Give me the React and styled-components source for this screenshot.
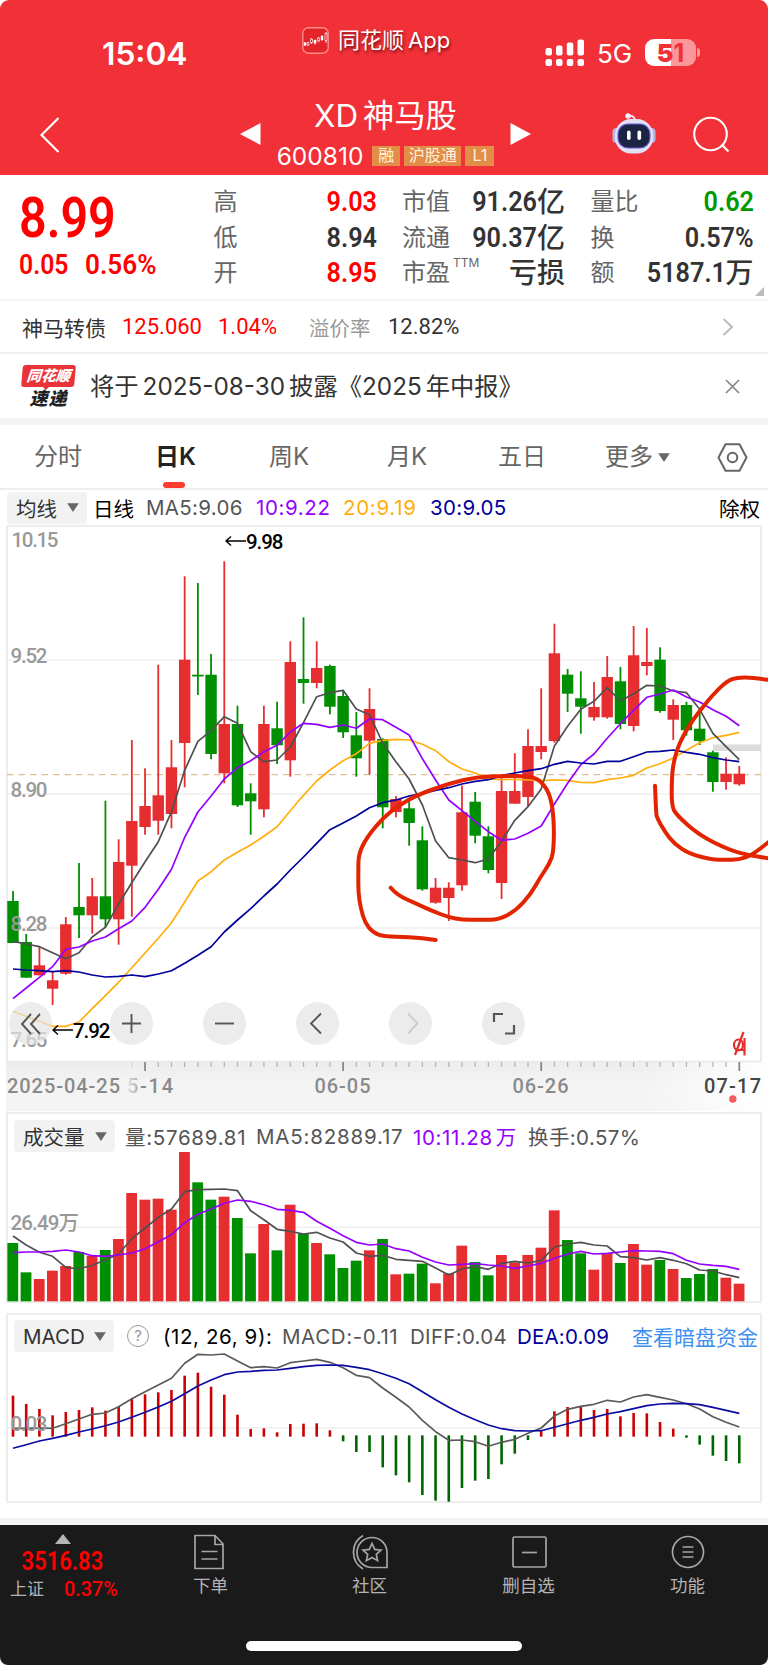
import styled, { createGlobalStyle } from "styled-components";

const RED = "#e62d2f";
const GREEN = "#008f00";
const STEP = 13.205;
const xAt = (i) => 13 + i * STEP;

// [high, bodyTop, bodyBottom, low, up]
const candles = [
  [891, 901, 943, 943, 0], [934, 942, 977.7, 977.7, 0], [946.7, 965.3, 975.3, 975.3, 1],
  [971.7, 980.3, 988.7, 1005, 1], [917, 924.3, 973.7, 974.7, 1], [863, 907, 915.3, 938, 0],
  [878, 896.3, 915.3, 933.7, 1], [800.7, 896.3, 919.3, 927, 0], [839.3, 862, 919.3, 944.7, 1],
  [740, 821, 865.7, 916.7, 1], [768.3, 806, 827, 834.7, 1], [664.7, 795.3, 820.7, 834.7, 1],
  [740, 767.3, 814, 828.3, 1], [576.3, 659.7, 743, 787.3, 1], [583, 674.7, 676.5, 695, 0],
  [654, 674.7, 754, 759.3, 0], [561.3, 724, 773.3, 783.3, 1], [705.7, 724, 805.3, 807, 0],
  [783.3, 793.3, 801.3, 834.7, 0], [705.7, 724, 809.3, 817.3, 1], [701.7, 728.3, 745.3, 764, 0],
  [641.3, 662, 760.3, 776.7, 1], [617.3, 679, 683, 703.7, 0], [641.3, 668, 683, 688.3, 1],
  [664.7, 666, 706.7, 714.3, 0], [690.3, 696, 732.3, 738, 0], [712, 735.3, 758.3, 776.7, 0],
  [688.3, 709, 740.7, 774.7, 1], [738.3, 739, 807.3, 828.3, 0], [796, 799, 812, 817.3, 1],
  [800, 808.3, 823, 845.7, 0], [826.3, 840.3, 889.3, 890.7, 0], [878, 887.7, 902.7, 903.7, 1],
  [882.3, 887.7, 898, 921, 1], [785.5, 812.3, 885.3, 890.7, 1], [792, 801.7, 835.7, 843.3, 0],
  [826.3, 836.3, 870, 873.3, 0], [776.7, 791, 883, 899, 1], [753.3, 791, 803.7, 803.7, 1],
  [729.3, 746, 797, 806.7, 1], [688.3, 746, 752, 759.3, 1], [623.7, 653.3, 741, 742.7, 1],
  [669, 674.7, 693.7, 712, 0], [671.3, 698.3, 706.7, 733.7, 0], [682, 707, 717.3, 720.7, 1],
  [656, 677, 717.3, 718.7, 1], [667, 681.3, 724, 729.3, 0], [626, 655.3, 726, 731.3, 1],
  [628, 662, 666, 675.3, 1], [647.3, 659.7, 711, 712.7, 0], [699.3, 705, 719.7, 740, 1],
  [701.7, 705, 730.3, 735.7, 0], [711, 728.7, 741, 745, 0], [750.7, 752.3, 782, 791.7, 0],
  [757.3, 773.7, 782, 789.7, 1], [766, 773.7, 784.3, 785.7, 1],
];

const ma5 = [941.3, 944, 946.7, 952.7, 958.7, 952.7, 937, 927.3, 904, 882.7, 861.7, 841.7, 811.7, 770.3, 741.3, 730.7, 716.7, 723.3, 751.7, 761.7, 760, 747, 722.7, 696.7, 692.7, 690.3, 709, 714.7, 743, 761.7, 779, 805, 841, 857.7, 860, 862.7, 859, 841, 820.3, 806.7, 788.9, 746, 726.3, 709.3, 701.3, 687.7, 701, 693.7, 685.3, 686, 691, 692.7, 709.3, 733.3, 746.7, 759.7];
const ma10 = [998.7, 988, 977.3, 966.7, 949.3, 947, 941, 937, 928.7, 921, 907.3, 889.3, 869.3, 837.3, 812, 796, 779, 767.7, 760.7, 751.7, 745.3, 732, 723.3, 724.3, 727.3, 725, 728.3, 719, 719.7, 727.3, 735, 758.7, 780, 800, 810.7, 821.3, 831.7, 840.3, 839, 833.3, 826, 804, 783.3, 764.7, 754, 738.3, 723.7, 710.3, 697.3, 694, 690, 697, 702, 709.7, 716.3, 725.7];
const ma20 = [1011.3, 1016.3, 1021.3, 1026.3, 1026.3, 1022, 1008.7, 995.7, 982.3, 967.7, 953, 938.3, 922.7, 902, 881, 871.7, 860, 852.3, 845, 836.3, 826.7, 810.7, 795.3, 781, 770, 760.7, 753.7, 743.3, 740.3, 739.3, 740, 744.3, 750.7, 761.7, 769, 773, 779, 779.7, 779.3, 780, 780.7, 780, 780.3, 782.3, 782.7, 779.7, 778, 775.3, 768, 763.7, 758, 750.3, 742.7, 737.7, 735.3, 732.3];
const ma30 = [969, 970, 970.7, 971.7, 970.7, 972, 975, 977, 976.3, 975, 976.7, 974, 970.7, 963.3, 955.3, 946.7, 932, 920, 908.7, 896, 884, 870, 857, 843.3, 829.7, 823, 816, 807.7, 802.7, 800, 796, 793.3, 790.5, 787.7, 784, 781.3, 779.7, 775.7, 773, 770.7, 768.7, 764.3, 761.3, 763, 764, 761.3, 761.3, 756.7, 752, 751.3, 750, 752.3, 754.3, 757.7, 760, 761.7];

// volume and macd series are stored in thirds of a pixel from the panel top
const volume = [399, 487, 507, 482, 468, 426, 437, 420, 387, 249, 269, 266, 299, 126, 217, 269, 260, 324, 430, 342, 421, 284, 372, 399, 433, 474, 452, 421, 387, 493, 491, 461, 520, 490, 407, 456, 496, 435, 457, 435, 413, 301, 390, 430, 479, 430, 459, 402, 464, 450, 477, 504, 492, 477, 503, 521];
const vol5 = [378, 405, 427, 439, 472, 477, 466, 450, 432, 386, 354, 322, 297, 245, 239, 238, 237, 242, 302, 329, 358, 364, 372, 367, 384, 396, 429, 439, 436, 448, 451, 454, 474, 495, 477, 470, 478, 460, 454, 459, 451, 411, 402, 397, 405, 408, 440, 443, 450, 443, 451, 461, 480, 483, 494, 503];
const vol10 = [428, 426, 426, 424, 420, 426, 437, 439, 435, 429, 416, 395, 374, 338, 313, 297, 280, 270, 274, 284, 298, 301, 307, 334, 355, 377, 397, 405, 402, 416, 423, 442, 456, 465, 463, 461, 465, 468, 475, 468, 460, 445, 432, 424, 432, 430, 426, 422, 423, 424, 431, 451, 462, 466, 469, 478];

const macd = [272, 297, 312, 331, 321, 315, 307, 317, 305, 282, 268, 262, 255, 212, 203, 245, 269, 329, 372, 370, 382, 357, 356, 355, 376, 409, 441, 441, 487, 511, 532, 570, 587, 590, 549, 527, 522, 478, 446, 405, 377, 319, 306, 306, 315, 312, 334, 324, 325, 351, 371, 398, 419, 452, 468, 475];
const diff = [370, 370, 369, 370, 356, 342, 328, 324, 305, 281, 260, 240, 220, 175, 148, 150, 147, 168, 188, 185, 189, 173, 168, 163, 172, 188, 211, 218, 249, 277, 306, 346, 380, 406, 405, 410, 424, 412, 403, 385, 369, 333, 313, 304, 298, 286, 291, 276, 269, 277, 285, 296, 312, 335, 352, 366];
const dea = [430, 419, 408, 400, 391, 381, 372, 362, 351, 337, 322, 306, 289, 266, 243, 225, 209, 201, 199, 196, 195, 190, 185, 181, 180, 181, 187, 194, 206, 220, 236, 260, 284, 307, 327, 344, 360, 371, 377, 378, 377, 367, 356, 346, 337, 327, 320, 311, 302, 297, 295, 296, 299, 307, 316, 325];

const strokes = [
  [[390.7, 887.7], [397, 895], [417, 904], [434, 911.7], [449, 917.3], [462, 919.7], [480, 919.7], [499, 919.7], [515.7, 910.7], [530.7, 894.3], [540, 877.7], [549.7, 863.3], [553.7, 851.7], [554, 820], [550.7, 796.7], [543, 783], [532, 776], [500.7, 776], [477, 777], [450.7, 783], [417, 795], [398, 806], [383, 818], [367, 837], [358.5, 854], [358.3, 872], [358.3, 893], [360.7, 908], [365, 923], [373, 932.7], [384, 936.7], [409, 936.7], [435.7, 940]],
  [[655, 785.7], [656, 812], [657, 818], [665, 832], [674, 843.5], [689, 853.8], [712.3, 859.7], [725, 859.7], [739, 859.7], [752, 855], [770, 841]],
  [[770, 680], [754, 677.7], [737.3, 677.3], [727.3, 681], [714, 693.3], [692.3, 720], [679, 743.3], [673.3, 763.3], [671.7, 780], [671.7, 806], [676.5, 815], [699, 835], [729, 850], [750.7, 855.7], [770, 858.5]],
];

const points = (list, top = 0, scale = 1) =>
  list.map((v, i) => `${xAt(i).toFixed(1)},${(top + v * scale).toFixed(1)}`).join(" ");

// smooths a free-hand stroke through the midpoints of its samples
const smooth = (pts) => {
  let d = `M${pts[0]}`;
  for (let i = 1; i < pts.length - 1; i++) {
    const [x, y] = pts[i];
    const [nx, ny] = pts[i + 1];
    d += ` Q${x} ${y} ${(x + nx) / 2} ${(y + ny) / 2}`;
  }
  return `${d} L${pts[pts.length - 1]}`;
};

const Line = ({ list, color, top, scale }) => (
  <polyline points={points(list, top, scale)} fill="none" stroke={color} strokeWidth="1.7" strokeLinejoin="round" />
);

const Caret = () => (
  <svg width="12" height="9" viewBox="0 0 12 9">
    <path d="M0.2 0.3h11.6L6 8.9z" fill="#666" />
  </svg>
);

const KLineChart = () => (
  <Canvas width="768" height="586" viewBox="0 525 768 586">
    <defs>
      <linearGradient id="axis" x1="0" y1="0" x2="0" y2="1">
        <stop offset="0" stopColor="#ededed" />
        <stop offset="0.5" stopColor="#f4f4f4" />
        <stop offset="1" stopColor="#f3f3f3" />
      </linearGradient>
      <linearGradient id="axisFade" x1="0" y1="0" x2="1" y2="0">
        <stop offset="0" stopColor="#fff" stopOpacity="0" />
        <stop offset="1" stopColor="#fff" />
      </linearGradient>
      <linearGradient id="dateFade" x1="0" y1="0" x2="1" y2="0">
        <stop offset="0" stopColor="#f3f3f3" />
        <stop offset="1" stopColor="#f3f3f3" stopOpacity="0.3" />
      </linearGradient>
    </defs>
    <rect x="6" y="1062" width="762" height="49" fill="url(#axis)" />
    <rect x="640" y="1062" width="128" height="49" fill="url(#axisFade)" />
    <rect x="7" y="526" width="754" height="535.5" fill="none" stroke="#ebebeb" strokeWidth="1.8" />
    {[660, 794, 928].map((y) => (
      <path key={y} d={`M7 ${y}H761`} stroke="#efefef" strokeWidth="1.4" />
    ))}
    <path d="M7 774.6H761" stroke="#dfbf98" strokeWidth="1.3" strokeDasharray="6.5 5" />
    <rect x="713" y="744.5" width="48" height="6.5" fill="#dcdcdc" />

    {candles.map(([high, top, bottom, low, up], i) => (
      <g key={i} fill={up ? RED : GREEN}>
        <rect x={xAt(i) - 0.9} y={high} width="1.8" height={low - high} />
        <rect x={xAt(i) - 5.7} y={top} width="11.4" height={bottom - top} />
      </g>
    ))}
    <Line list={ma20} color="#ffae0d" />
    <Line list={ma5} color="#505050" />
    <Line list={ma10} color="#9500ff" />
    <Line list={ma30} color="#00009c" />

    <AxisText x="11.5" y="547" textLength="47">10.15</AxisText>
    <AxisText x="10.5" y="663" textLength="37">9.52</AxisText>
    <AxisText x="10.5" y="797" textLength="37">8.90</AxisText>
    <AxisText x="10.5" y="931" textLength="37">8.28</AxisText>
    <AxisText x="10.5" y="1047" textLength="37">7.65</AxisText>

    <g fill="none" stroke="#000" strokeWidth="1.4">
      <path d="M246 541H226M231 536.5L226 541L231 545.5" />
      <path d="M73 1030H53M58 1025.5L53 1030L58 1034.5" />
    </g>
    <MarkText x="246" y="548.5" textLength="37.5">9.98</MarkText>
    <MarkText x="73" y="1038" textLength="37.5">7.92</MarkText>

    {candles.map((_, i) => {
      if (i < 9) return null;
      const major = i % 15 === 10;
      return (
        <path
          key={i}
          d={`M${xAt(i)} 1062v${major ? 9 : 5}`}
          stroke={major ? "#888" : "#b5b5b5"}
          strokeWidth={major ? 1.8 : 1.3}
          opacity={i === 9 ? 0.4 : 1}
        />
      );
    })}
    <DateText x="127" y="1093" textLength="46">5-14</DateText>
    <rect x="124" y="1074" width="15" height="24" fill="url(#dateFade)" />
    <DateText x="7" y="1093" textLength="113">2025-04-25</DateText>
    <DateText x="314.5" y="1093" textLength="56">06-05</DateText>
    <DateText x="512.5" y="1093" textLength="56">06-26</DateText>
    <DateText x="704" y="1093" textLength="57" $active>07-17</DateText>
    <circle cx="732.8" cy="1099" r="3.7" fill="#f55a60" />

    <g fill="none" stroke={RED} strokeWidth="2.2">
      <ellipse cx="738.5" cy="1045" rx="4.5" ry="5.5" />
      <path d="M744.5 1038V1055.5M743.5 1032L735 1055M735.5 1050H744" />
    </g>
    {strokes.map((pts, i) => (
      <path key={i} d={smooth(pts)} fill="none" stroke="#e32400" strokeWidth="4" strokeLinecap="round" />
    ))}
  </Canvas>
);

const VolumeChart = () => (
  <Canvas width="768" height="194" viewBox="0 1111 768 194">
    <rect x="7" y="1113" width="754" height="189" fill="none" stroke="#ebebeb" strokeWidth="1.8" />
    <path d="M7 1227.3H761" stroke="#efefef" strokeWidth="1.4" />
    {volume.map((v, i) => (
      <rect key={i} x={xAt(i) - 5.6} y={1110 + v / 3} width="10.8" height={(574 - v) / 3} fill={candles[i][4] ? RED : GREEN} />
    ))}
    <Line list={vol5} color="#505050" top={1110} scale={1 / 3} />
    <Line list={vol10} color="#9500ff" top={1110} scale={1 / 3} />
    <AxisText x="10.5" y="1230" textLength="68.5">26.49万</AxisText>
  </Canvas>
);

const MacdChart = () => (
  <Canvas width="768" height="213" viewBox="0 1305 768 213">
    <rect x="7" y="1314" width="754" height="188" fill="none" stroke="#ebebeb" strokeWidth="1.8" />
    <path d="M7 1427.8H761" stroke="#efefef" strokeWidth="1.4" />
    {macd.map((v, i) => {
      const up = v < 393;
      return (
        <rect
          key={i}
          x={xAt(i) - 1.3}
          y={1305 + (up ? v : 391) / 3}
          width="2.6"
          height={Math.abs(v - (up ? 395 : 391)) / 3}
          fill={up ? "#cc0000" : "#006600"}
        />
      );
    })}
    <Line list={diff} color="#5a5a5a" top={1305} scale={1 / 3} />
    <Line list={dea} color="#0b0ba3" top={1305} scale={1 / 3} />
    <AxisText x="10.5" y="1430.5" textLength="37">0.03</AxisText>
  </Canvas>
);

const quotes = [
  [["高", "9.03", "#f00"], ["低", "8.94"], ["开", "8.95", "#f00"]],
  [["市值", "91.26", "", "亿"], ["流通", "90.37", "", "亿"], ["市盈", "", "", "亏损", "TTM"]],
  [["量比", "0.62", "#009900"], ["换", "0.57%"], ["额", "5187.1", "", "万"]],
];

const tabs = [
  { name: "分时", width: 121 },
  { name: "日K", width: 114, active: true },
  { name: "周K", width: 118 },
  { name: "月K", width: 111 },
  { name: "五日", width: 107 },
  { name: "更多", width: 80, more: true },
];

const App = () => {
  return (
    <Screen>
      <GlobalStyle />
      <Header>
        <StatusBar>
          <Clock>15:04</Clock>
          <AppMark>
            <svg width="27" height="27" viewBox="0 0 27 27">
              <rect x="0.8" y="0.8" width="25.4" height="25.4" rx="5.5" fill="#e3242b" stroke="#ff8a8a" strokeWidth="1.4" />
              <g fill="none" stroke="#fff" strokeWidth="0.8">
                <path d="M3 15v4M6 15v4M9.500 11v6M13 12.500v5M16.500 10v5M20 8v6M24 5v11" />
              </g>
              <path d="M1.800 15.500h2.400v3h-2.400zM11.800 13h2.400v3.500h-2.400zM18.800 9h2.400v4h-2.400z" fill="#fff" />
              <path d="M5 15.500h2v2.500h-2zM8.500 12h2v3.500h-2zM15.500 11h2v3h-2zM23 6.500h2v7h-2z" fill="#e3242b" stroke="#fff" strokeWidth="0.7" />
            </svg>
            <AppName>同花顺<i>App</i></AppName>
          </AppMark>
          <Signals>
            <svg width="40" height="28" viewBox="0 0 40 28" fill="#fff">
              <rect x="0.5" y="9" width="6.5" height="7.5" rx="2" />
              <rect x="11" y="6.5" width="6.5" height="10" rx="2" />
              <rect x="21.8" y="3.5" width="6.5" height="13" rx="2" />
              <rect x="32.5" y="0.5" width="6.5" height="16" rx="2" />
              <rect x="0.5" y="20" width="6.5" height="7" rx="2" />
              <rect x="11" y="20" width="6.5" height="7" rx="2" />
              <rect x="21.8" y="20" width="6.5" height="7" rx="2" />
              <rect x="32.5" y="20" width="6.5" height="7" rx="2" />
            </svg>
            <Network>5G</Network>
            <Battery><b>5</b>1</Battery>
            <BatteryTip />
          </Signals>
        </StatusBar>
        <TitleBar>
          <svg width="20" height="36" viewBox="0 0 20 36">
            <path d="M18.5 1L1.5 18L18.5 35" fill="none" stroke="#fff" strokeWidth="2.2" />
          </svg>
          <Switcher>
            <svg width="21" height="22" viewBox="0 0 21 22"><path d="M20.5 0v22L0 11z" fill="#fff" /></svg>
            <Stock>
              <StockName>XD<span>神马股</span></StockName>
              <StockMeta>
                <Code>600810</Code>
                <Tag $w={28}>融</Tag>
                <Tag $w={57}>沪股通</Tag>
                <Tag $w={29}>L1</Tag>
              </StockMeta>
            </Stock>
            <svg width="21" height="22" viewBox="0 0 21 22"><path d="M0.5 0v22L21 11z" fill="#fff" /></svg>
          </Switcher>
          <Actions>
            <svg width="44" height="41" viewBox="0 0 44 41">
              <path d="M16 3q7-1 7 5" fill="none" stroke="#e9e6f8" strokeWidth="2" />
              <circle cx="16" cy="3" r="2.7" fill="#f4f2ff" />
              <rect x="0.5" y="15" width="8" height="15" rx="4" fill="#b9b5e2" />
              <rect x="35.5" y="15" width="8" height="15" rx="4" fill="#b9b5e2" />
              <rect x="3" y="6" width="38" height="34.5" rx="16" fill="#e3e1f6" />
              <rect x="6" y="11" width="32" height="24" rx="10" fill="#1c2443" stroke="#6c5bd0" strokeWidth="1.2" />
              <rect x="15" y="17.5" width="3.6" height="9.5" rx="1.8" fill="#fff" />
              <rect x="25.5" y="17.5" width="3.6" height="9.5" rx="1.8" fill="#fff" />
            </svg>
            <svg width="37" height="37" viewBox="0 0 37 37" fill="none" stroke="#fff" strokeWidth="2.1">
              <circle cx="17.5" cy="18" r="16.3" />
              <path d="M29 29l6.5 6.5" />
            </svg>
          </Actions>
        </TitleBar>
      </Header>

      <QuotePanel>
        <Latest>
          <Price>8.99</Price>
          <Change>
            <Din $size={27.5} $scale={0.9}>0.05</Din>
            <Din $size={27.5} $scale={0.95}>0.56%</Din>
          </Change>
        </Latest>
        {quotes.map((rows, i) => (
          <QuoteColumn key={i}>
            {rows.map(([label, value, color, unit, sup]) => (
              <QuoteRow key={label}>
                <QuoteLabel>{label}{sup && <sup>{sup}</sup>}</QuoteLabel>
                <QuoteValue $color={color || "#333"}>
                  <Din $size={28} $scale={0.9} $right>{value}</Din>
                  {unit}
                </QuoteValue>
              </QuoteRow>
            ))}
          </QuoteColumn>
        ))}
        <Corner width="9" height="9" viewBox="0 0 9 9"><path d="M9 0v9H0z" fill="#bbb" /></Corner>
      </QuotePanel>

      <BondRow>
        <Item $w={100} $size={21}>神马转债</Item>
        <Item $w={96} $color="#f00">125.060</Item>
        <Item $w={91} $color="#f00">1.04%</Item>
        <Item $w={79} $size={20.5} $color="#999">溢价率</Item>
        <Item>12.82%</Item>
        <svg width="12" height="18" viewBox="0 0 12 18"><path d="M1.5 1L10 9L1.5 17" fill="none" stroke="#bbb" strokeWidth="2" /></svg>
      </BondRow>

      <NewsRow>
        <Logo>
          <LogoTop>同花顺</LogoTop>
          <LogoBottom>速递</LogoBottom>
        </Logo>
        <NewsText>将于<em>2025-08-30</em>披露《2025<em>年中报》</em></NewsText>
        <svg width="15" height="15" viewBox="0 0 15 15"><path d="M1 1L14 14M14 1L1 14" stroke="#888" strokeWidth="1.7" /></svg>
      </NewsRow>

      <Tabs>
        {tabs.map((tab) => (
          <Tab key={tab.name} $w={tab.width} $active={tab.active}>
            {tab.name}
            {tab.more && <Caret />}
          </Tab>
        ))}
        <svg width="31" height="29" viewBox="0 0 31 29" fill="none" stroke="#666" strokeWidth="2">
          <path d="M8.5 1.2h14L29.5 14.5L22.5 27.8h-14L1.5 14.5z" strokeLinejoin="round" />
          <circle cx="15.5" cy="14.5" r="4.8" />
        </svg>
      </Tabs>

      <MaLegend>
        <Picker $w={80}>均线<Caret /></Picker>
        <Item $w={53} $color="#000">日线</Item>
        <Item $w={110} $color="#555" $spacing={0.3}>MA5:9.06</Item>
        <Item $w={87} $color="#9500ff" $spacing={0.6}>10:9.22</Item>
        <Item $w={87} $color="#ffae0d" $spacing={0.7}>20:9.19</Item>
        <Item $color="#00009c" $spacing={0.3}>30:9.05</Item>
        <Adjust>除权</Adjust>
      </MaLegend>

      <Panel $height={586}>
        <KLineChart />
        <Controls>
          <RoundButton><path d="M22 12L13 22L22 32M31 12L22 22L31 32" /></RoundButton>
          <RoundButton $first><path d="M12 21.5H31M21.5 12V31" /></RoundButton>
          <RoundButton><path d="M12 21.5H31" /></RoundButton>
          <RoundButton><path d="M25 11.5L15 21.5L25 31.5" /></RoundButton>
          <RoundButton $muted><path d="M19 11.5L28.5 21.5L19 31.5" /></RoundButton>
          <RoundButton><path d="M12 20V12H21M23 31.5H32V23" strokeWidth="2.2" /></RoundButton>
        </Controls>
      </Panel>

      <Panel $height={194}>
        <VolumeChart />
        <Legend $top={9}>
          <Picker $w={101}>成交量<Caret /></Picker>
          <Item $w={131} $color="#555" $spacing={0.7}>量:57689.81</Item>
          <Item $w={157} $color="#555" $spacing={0.8}>MA5:82889.17</Item>
          <Item $w={115} $color="#9500ff" $spacing={0.6}>10:11.28<s>万</s></Item>
          <Item $color="#555" $spacing={0.4}>换手:0.57%</Item>
        </Legend>
      </Panel>

      <Panel $height={213}>
        <MacdChart />
        <Legend $top={15}>
          <Picker $w={100}>MACD<Caret /></Picker>
          <HelpIcon>?</HelpIcon>
          <Item $w={119} $color="#000" $spacing={0.6}>(12, 26, 9):</Item>
          <Item $w={128} $color="#555" $spacing={0.6}>MACD:-0.11</Item>
          <Item $w={107} $color="#555" $spacing={0.3}>DIFF:0.04</Item>
          <Item $w={115} $color="#00009c" $spacing={0.2}>DEA:0.09</Item>
          <Item $color="#3d8ff2" $size={21}>查看暗盘资金</Item>
        </Legend>
      </Panel>

      <BottomBar>
        <IndexBox>
          <svg width="16" height="10" viewBox="0 0 16 10"><path d="M8 0L16 10H0z" fill="#b5b5b5" /></svg>
          <IndexValue>3516.83</IndexValue>
          <IndexMeta>上证<Din $size={21} $scale={0.94} $weight={500} $color="#f00">0.37%</Din></IndexMeta>
        </IndexBox>
        <NavItem>
          <svg width="36" height="36" viewBox="0 0 36 36">
            <path d="M2 1.500h20l8 8.500v24.500h-28zM22 2v8.500h8M8.500 17.500h16M8.500 25h16" />
          </svg>
          下单
        </NavItem>
        <NavItem>
          <svg width="36" height="36" viewBox="0 0 36 36">
            <path d="M20 3.500a15 15 0 0 0 0 30h15v-15a15 15 0 0 0-15-15z M11 1.500a19.500 19.500 0 0 0 0 33.500" />
            <path d="M20 9.500l2.700 5.900 6.300 0.700-4.700 4.300 1.300 6.300-5.600-3.200-5.600 3.200 1.300-6.300-4.700-4.300 6.300-0.700z" />
          </svg>
          社区
        </NavItem>
        <NavItem>
          <svg width="36" height="36" viewBox="0 0 36 36">
            <rect x="2" y="3" width="33" height="30" rx="1.500" />
            <path d="M11 18.500h15" />
          </svg>
          删自选
        </NavItem>
        <NavItem>
          <svg width="36" height="36" viewBox="0 0 36 36">
            <circle cx="18" cy="18" r="15.500" />
            <path d="M12.500 13h11M12.500 18h11M12.500 23h11" />
          </svg>
          功能
        </NavItem>
        <HomeIndicator />
      </BottomBar>
    </Screen>
  );
};

export default App;

const RoundButton = ({ children, $first, $muted }) => (
  <Round $first={$first}>
    <svg width="43" height="43" viewBox="0 0 43 43" fill="none" stroke={$muted ? "#ccc" : "#555"} strokeWidth="1.9">
      {children}
    </svg>
  </Round>
);

const GlobalStyle = createGlobalStyle`
  body {
    margin: 0;
    background-color: white;
    font-family: Inter, "Noto Sans CJK SC", sans-serif;
  }
  * {
    box-sizing: border-box;
  }
  svg {
    display: block;
    flex-shrink: 0;
  }
`;

const Screen = styled.div`
  width: 768px;
  height: 1665px;
  display: flex;
  flex-direction: column;
  overflow: hidden;
  background-color: white;
  white-space: nowrap;
`;

const Header = styled.header`
  height: 174.5px;
  flex-shrink: 0;
  background-color: #f23037;
  border-radius: 9px 9px 0 0;
  color: white;
`;

const StatusBar = styled.div`
  height: 88px;
  display: flex;
  align-items: flex-start;
`;

const Clock = styled.div`
  width: 200px;
  margin: 33.5px 0 0 102px;
  font-size: 31.7px;
  line-height: 39px;
  font-weight: 600;
`;

const AppMark = styled.div`
  width: 243px;
  display: flex;
  gap: 9px;
  margin-top: 27px;
`;

const AppName = styled.span`
  font-size: 22px;
  line-height: 27px;
  font-weight: 400;
  text-shadow: 1px 2px 3px rgba(60, 0, 0, 0.7);

  i {
    font-style: normal;
    margin-left: 4px;
  }
`;

const Signals = styled.div`
  display: flex;
  align-items: center;
  margin-top: 37.5px;
`;

const Network = styled.span`
  width: 48px;
  margin-left: 12px;
  padding-top: 2px;
  font-size: 26px;
  line-height: 28px;
  font-weight: 400;
`;

const Battery = styled.div`
  width: 51px;
  height: 27px;
  border-radius: 9px;
  background: linear-gradient(90deg, white 51%, #f9979b 51%);
  color: #f23037;
  font-size: 25px;
  line-height: 28px;
  font-weight: 700;
  text-align: center;
`;

const BatteryTip = styled.div`
  width: 3px;
  height: 9px;
  margin-left: 1px;
  border-radius: 0 4px 4px 0;
  background-color: #f9979b;
`;

const TitleBar = styled.div`
  height: 86px;
  display: flex;
  padding-left: 40px;

  > svg {
    margin-top: 29px;
  }
`;

const Switcher = styled.div`
  width: 372px;
  display: flex;
  margin-left: 180px;

  > svg {
    margin-top: 35px;
  }
`;

const Stock = styled.div`
  width: 249px;
  display: flex;
  flex-direction: column;
  align-items: center;
`;

const StockName = styled.div`
  margin-top: 9px;
  font-size: 31.3px;
  line-height: 38px;
  font-weight: 400;

  span {
    margin-left: 5px;
  }
`;

const StockMeta = styled.div`
  display: flex;
  align-items: center;
  gap: 4px;
  margin-top: 11px;
`;

const Code = styled.span`
  margin-right: 5px;
  font-size: 24.5px;
  line-height: 20px;
`;

const Tag = styled.span`
  width: ${({ $w }) => $w}px;
  height: 20px;
  background-color: #e28d48;
  color: #fff1de;
  font-size: 16px;
  line-height: 19px;
  text-align: center;
`;

const Actions = styled.div`
  display: flex;
  gap: 37px;

  svg:first-child {
    margin-top: 25px;
  }

  svg:last-child {
    margin-top: 28px;
  }
`;

const Din = styled.span`
  display: inline-block;
  font-family: Roboto, "Noto Sans CJK SC", sans-serif;
  font-size: ${({ $size }) => $size}px;
  font-weight: ${({ $weight }) => $weight || 600};
  color: ${({ $color }) => $color || "inherit"};
  transform: scaleX(${({ $scale }) => $scale || 0.88});
  transform-origin: ${({ $right }) => ($right ? "right" : "left")};
`;

const QuotePanel = styled.section`
  position: relative;
  height: 126.5px;
  flex-shrink: 0;
  display: grid;
  grid-template-columns: 164px 163px 163px 163px;
  column-gap: 25.5px;
  padding-left: 19px;
  border-bottom: 2px solid #f4f4f4;
`;

const Latest = styled.div`
  width: 194px;
  color: #f00;
`;

const Price = styled(Din).attrs({ $size: 55 })`
  margin-top: 11px;
  line-height: 64px;
`;

const Change = styled.div`
  display: flex;
  line-height: 32px;
  margin-top: -1px;

  span:last-child {
    margin-left: 11px;
  }
`;

const QuoteColumn = styled.div`
  padding-top: 10px;
  margin-left: 5px;
  margin-right: -5px;
`;

const QuoteRow = styled.div`
  height: 35.5px;
  display: flex;
  justify-content: space-between;
  align-items: center;
`;

const QuoteLabel = styled.span`
  color: #666;
  font-size: 24px;
  line-height: 34px;

  sup {
    position: relative;
    top: -5px;
    margin-left: 3px;
    font-size: 12px;
    line-height: 0;
  }
`;

const QuoteValue = styled.span`
  display: flex;
  align-items: center;
  color: ${({ $color }) => $color};
  font-size: 28px;
  font-weight: 500;
  line-height: 34px;
`;

const Corner = styled.svg`
  position: absolute;
  right: 4px;
  bottom: 3px;
`;

const Item = styled.span`
  width: ${({ $w }) => ($w ? `${$w}px` : "auto")};
  flex-shrink: 0;
  color: ${({ $color }) => $color || "#333"};
  font-size: ${({ $size }) => ($size ? `${$size}px` : "inherit")};
  letter-spacing: ${({ $spacing }) => $spacing || 0}px;

  s {
    margin-left: 3px;
    text-decoration: none;
  }
`;

const BondRow = styled.section`
  height: 53px;
  flex-shrink: 0;
  display: flex;
  align-items: center;
  padding: 0 34px 0 22px;
  border-bottom: 2px solid #f0f0f0;
  font-family: Roboto, "Noto Sans CJK SC", sans-serif;
  font-size: 22px;

  svg {
    margin-left: auto;
  }
`;

const NewsRow = styled.section`
  height: 71px;
  flex-shrink: 0;
  display: flex;
  align-items: center;
  padding: 0 28px 0 22px;
  border-bottom: 7px solid #f4f4f4;

  > svg {
    margin-left: auto;
  }
`;

const Logo = styled.div`
  width: 53px;
  font-style: italic;
  text-align: center;
  font-weight: 900;
`;

const LogoTop = styled.div`
  position: relative;
  height: 22px;
  background-color: #ea3338;
  border-radius: 3px;
  transform: skewX(-5deg);
  color: white;
  font-size: 14.5px;
  line-height: 21px;

  &::after {
    content: "";
    position: absolute;
    left: 22px;
    bottom: -3px;
    border: 3px solid transparent;
    border-top-color: #ea3338;
    border-bottom: none;
  }
`;

const LogoBottom = styled.div`
  height: 21px;
  color: #222;
  font-size: 18px;
  line-height: 23px;
  letter-spacing: 1px;
`;

const NewsText = styled.span`
  margin: -4px 0 0 15px;
  color: #333;
  font-size: 24.3px;

  em {
    font-style: normal;
    margin: 0 4px;
  }
`;

const Tabs = styled.nav`
  height: 65px;
  flex-shrink: 0;
  display: flex;
  align-items: center;
  padding: 1px 20px 0 34px;
  border-bottom: 2px solid #eee;

  > svg {
    margin-left: auto;
  }
`;

const Tab = styled.div`
  position: relative;
  width: ${({ $w }) => $w}px;
  display: flex;
  align-items: center;
  gap: 5px;
  color: ${({ $active }) => ($active ? "#222" : "#666")};
  font-size: 24px;
  font-weight: ${({ $active }) => ($active ? 600 : 400)};
  line-height: 62px;

  &::after {
    content: "";
    display: ${({ $active }) => ($active ? "block" : "none")};
    position: absolute;
    left: 8px;
    bottom: 0;
    width: 22px;
    height: 6px;
    border-radius: 3px;
    background-color: #ff3b30;
  }
`;

const Picker = styled.div`
  width: ${({ $w }) => $w}px;
  height: 32px;
  display: flex;
  flex-shrink: 0;
  align-items: center;
  justify-content: space-between;
  margin-right: 10px;
  padding: 0 8px 0 9px;
  border-radius: 4px;
  background-color: #f2f2f2;
  color: #333;
  font-size: 20.5px;
`;

const MaLegend = styled.div`
  height: 35px;
  flex-shrink: 0;
  display: flex;
  align-items: center;
  padding: 0 8px 0 7px;
  font-size: 20.5px;

  ${Picker} {
    margin-right: 6px;
  }
`;

const Adjust = styled.span`
  margin-left: auto;
  color: #000;
`;

const Panel = styled.section`
  position: relative;
  height: ${({ $height }) => $height}px;
  flex-shrink: 0;
`;

const Canvas = styled.svg`
  display: block;
`;

const AxisText = styled.text`
  fill: #999;
  font-family: Roboto, "Noto Sans CJK SC", sans-serif;
  font-size: 20.5px;
  font-weight: 500;
`;

const MarkText = styled(AxisText)`
  fill: #000;
`;

const DateText = styled(AxisText)`
  fill: ${({ $active }) => ($active ? "#444" : "#8a8a8a")};
  font-size: 20px;
`;

const Controls = styled.div`
  position: absolute;
  left: 9px;
  top: 476.5px;
  display: flex;
  gap: 50px;
`;

const Round = styled.button`
  width: 43px;
  height: 43px;
  padding: 0;
  margin-left: ${({ $first }) => ($first ? 8 : 0)}px;
  border: none;
  border-radius: 50%;
  background-color: rgba(228, 228, 228, 0.7);
`;

const Legend = styled.div`
  position: absolute;
  left: 14px;
  top: ${({ $top }) => $top}px;
  display: flex;
  align-items: center;
  font-size: 20.5px;
`;

const HelpIcon = styled.span`
  width: 22px;
  height: 22px;
  margin: 0 14px 0 3px;
  border: 1.5px solid #999;
  border-radius: 50%;
  color: #999;
  font-size: 15px;
  line-height: 19px;
  text-align: center;
`;

const BottomBar = styled.footer`
  position: relative;
  height: 147px;
  flex-shrink: 0;
  display: flex;
  border-top: 7px solid #f4f4f4;
  background-color: #1a1a1a;
  border-radius: 0 0 8px 8px;
`;

const IndexBox = styled.div`
  width: 131px;
  display: flex;
  flex-direction: column;
  align-items: center;
  padding: 9px 6px 0 0;
`;

const IndexValue = styled(Din).attrs({ $size: 25, $color: "#f00" })`
  transform-origin: center;
  line-height: 35px;
`;

const IndexMeta = styled.div`
  align-self: flex-start;
  display: flex;
  align-items: center;
  gap: 20px;
  margin-left: 10px;
  color: #b3b3b3;
  font-size: 17px;
  line-height: 21px;
`;

const NavItem = styled.div`
  width: 159px;
  display: flex;
  flex-direction: column;
  align-items: center;
  gap: 4px;
  padding-top: 9px;
  color: #b3b3b3;
  font-size: 17.5px;
  line-height: 24px;

  svg {
    fill: none;
    stroke: #a5a5a5;
    stroke-width: 1.7;
  }
`;

const HomeIndicator = styled.div`
  position: absolute;
  left: 246px;
  bottom: 14px;
  width: 276px;
  height: 10px;
  border-radius: 5px;
  background-color: white;
`;
